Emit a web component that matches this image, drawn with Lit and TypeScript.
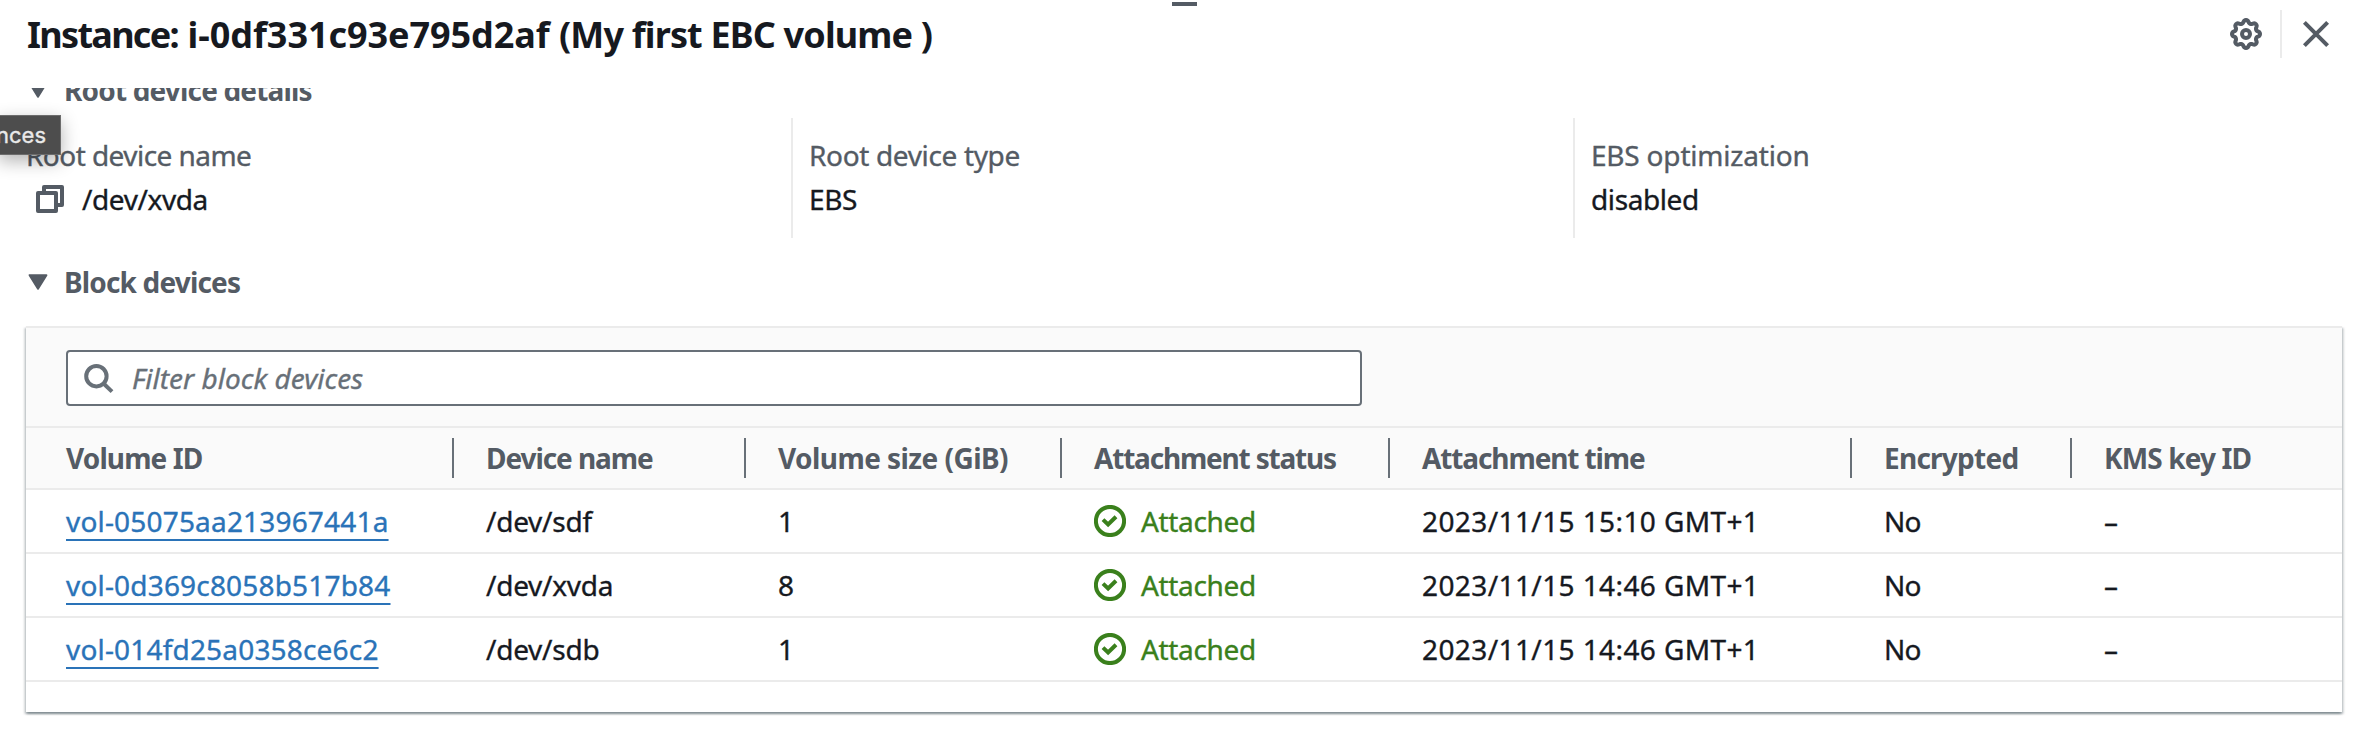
import { LitElement, html, css, svg } from "lit";
import { customElement } from "lit/decorators.js";

interface Volume {
  id: string;
  device: string;
  size: number;
  status: string;
  time: string;
  encrypted: string;
  kms: string;
}

const COLUMNS = [
  "Volume ID",
  "Device name",
  "Volume size (GiB)",
  "Attachment status",
  "Attachment time",
  "Encrypted",
  "KMS key ID",
];

const VOLUMES: Volume[] = [
  { id: "vol-05075aa213967441a", device: "/dev/sdf", size: 1, status: "Attached", time: "2023/11/15 15:10 GMT+1", encrypted: "No", kms: "–" },
  { id: "vol-0d369c8058b517b84", device: "/dev/xvda", size: 8, status: "Attached", time: "2023/11/15 14:46 GMT+1", encrypted: "No", kms: "–" },
  { id: "vol-014fd25a0358ce6c2", device: "/dev/sdb", size: 1, status: "Attached", time: "2023/11/15 14:46 GMT+1", encrypted: "No", kms: "–" },
];

// Eight-lobed gear outline around the centre of a 32px box.
const gearPoints = Array.from({ length: 96 }, (_, i) => {
  const a = (i / 96) * Math.PI * 2;
  const c = Math.cos(8 * a);
  const r = 12.5 + 1.5 * Math.sign(c) * Math.pow(Math.abs(c), 0.6);
  return `${(16 + r * Math.cos(a)).toFixed(2)},${(16 + r * Math.sin(a)).toFixed(2)}`;
}).join(" ");

const gearIcon = html`<svg class="icon" viewBox="0 0 32 32">
  ${svg`<polygon points=${gearPoints} /><circle cx="16" cy="16" r="4" />`}
</svg>`;
const closeIcon = html`<svg class="icon" viewBox="0 0 32 32"><path d="M4.4 4.4 27.6 27.6M27.6 4.4 4.4 27.6" /></svg>`;
const copyIcon = html`<svg class="icon" viewBox="0 0 32 32">
  <path stroke-linejoin="round" d="M4 10h18v18h-18zM10 10V4h18v18h-6" />
</svg>`;
const searchIcon = html`<svg class="icon search" viewBox="0 0 32 32"><circle cx="14.4" cy="14.2" r="10.2" /><path d="M21.3 21.2 30 29.6" /></svg>`;
const checkIcon = html`<svg class="icon check" viewBox="0 0 32 32"><circle cx="16" cy="16" r="14.1" /><path d="M9 14.6 14.1 19.4 22 11.8" /></svg>`;
const caretIcon = html`<svg class="caret" viewBox="0 0 20 16"><path d="M1.6 1.2h16.8L10 14.6z" /></svg>`;

@customElement("app-root")
export class AppRoot extends LitElement {
  static styles = css`
    :host {
      display: block;
      position: relative;
      height: 746px;
      overflow: hidden;
      background: #fff;
      color: #16191f;
      font: 400 28px/40px "Noto Sans", "Open Sans", sans-serif;
      -webkit-text-stroke: 0.35px currentColor;
      white-space: nowrap;
    }
    * { box-sizing: border-box; }
    .icon {
      display: block;
      flex: none;
      width: 32px;
      height: 32px;
      fill: none;
      stroke: #545b64;
      stroke-width: 4;
    }
    .grip {
      position: absolute;
      left: 1172px;
      top: 2px;
      width: 25px;
      height: 4px;
      background: #545b64;
    }
    .header {
      display: flex;
      justify-content: space-between;
      height: 88px;
      padding: 10px 30px 0 27px;
    }
    .title, .section, .head { -webkit-text-stroke-width: 0; }
    .title {
      margin: 0;
      padding-top: 3px;
      font-size: 36px;
      line-height: 44px;
      font-weight: 700;
    }
    .kind { letter-spacing: -1.7px; margin-right: 2px; }
    .ident { letter-spacing: -0.06px; }
    .name { letter-spacing: -0.85px; }
    .actions { display: flex; height: 48px; align-items: center; }
    .rule { width: 2px; height: 48px; margin: 0 18px; background: #ebebeb; }
    .body { padding: 0 20px 0 26px; overflow: hidden; height: 658px; }
    .section {
      display: flex;
      align-items: center;
      gap: 16px;
      height: 40px;
      margin: 0;
      padding-left: 2px;
      font-size: 28px;
      font-weight: 700;
      letter-spacing: -0.83px;
      color: #545b64;
    }
    .section span { padding-top: 2px; }
    .root { margin-top: -19px; }
    .caret { width: 20px; height: 16px; margin-top: 2px; fill: #545b64; stroke: #545b64; stroke-width: 2; stroke-linejoin: round; }
    .details {
      display: grid;
      grid-template-columns: 765px 782px 1fr;
      margin: 9px 0 23px;
    }
    .detail { height: 120px; padding: 17px 0 0 16px; border-left: 2px solid #ebebeb; }
    .detail:first-child { padding-left: 0; border-left: 0; }
    .label { color: #545b64; letter-spacing: -0.35px; margin-bottom: 4px; }
    .detail:first-child .label { letter-spacing: -0.55px; }
    .detail:last-child .label { letter-spacing: -0.2px; }
    .value { display: flex; align-items: center; letter-spacing: -0.4px; }
    .value .icon { margin: 0 16px 0 8px; }
    .card {
      width: 2316px;
      height: 386px;
      margin-top: 25px;
      border-top: 2px solid #ebebeb;
      background: #fff;
      box-shadow: 0 2px 2px rgba(0, 28, 36, 0.3), 2px 2px 2px rgba(0, 28, 36, 0.15), -2px 2px 2px rgba(0, 28, 36, 0.15);
    }
    .tools { height: 100px; padding: 22px 40px 0; background: #fafafa; border-bottom: 2px solid #ebebeb; }
    .filter {
      display: flex;
      align-items: center;
      gap: 18px;
      width: 1296px;
      height: 56px;
      padding-left: 14px;
      border: 2px solid #687078;
      border-radius: 4px;
      background: #fff;
      color: #687078;
      font-style: italic;
    }
    .search { stroke: #687078; }
    .row {
      display: grid;
      grid-template-columns: 428px 292px 316px 328px 462px 220px 1fr;
      align-items: center;
      height: 64px;
      border-bottom: 2px solid #ebebeb;
    }
    .cell { padding-left: 32px; }
    .cell:first-child { padding-left: 40px; }
    .head { height: 62px; background: #fafafa; color: #545b64; font-weight: 700; }
    .head .cell { height: 40px; border-right: 2px solid #687078; letter-spacing: -0.88px; }
    .head .cell:last-child { border-right: 0; }
    .head .cell:nth-child(2) { letter-spacing: -1.07px; }
    .head .cell:nth-child(3) { letter-spacing: -0.56px; }
    .head .cell:nth-child(4) { letter-spacing: -1.19px; }
    .head .cell:nth-child(5) { letter-spacing: -1.11px; }
    .head .cell:nth-child(6) { letter-spacing: -0.75px; }
    .link {
      color: #2a73b8;
      letter-spacing: 0.18px;
      text-decoration: underline 2px;
      text-underline-offset: 7px;
      text-decoration-skip-ink: none;
    }
    .device { letter-spacing: -0.25px; }
    .status { display: flex; align-items: center; gap: 15px; color: #3a801c; letter-spacing: -0.35px; }
    .check { stroke: #3a801c; }
    .time { letter-spacing: 0.4px; }
    .enc { letter-spacing: -0.9px; }
    .tooltip {
      position: absolute;
      left: -2px;
      top: 115px;
      width: 63px;
      height: 40px;
      padding-right: 14px;
      border: 1px solid #6c6c6c;
      background: #4d4d4d;
      box-shadow: 0 6px 18px rgba(0, 0, 0, 0.3);
      color: #e9e9e9;
      font: 400 22px/38px Inter, "Liberation Sans", sans-serif;
      display: flex;
      justify-content: flex-end;
      overflow: hidden;
    }
  `;

  private section(title: string, extra = "") {
    return html`<h2 class="section ${extra}">${caretIcon}<span>${title}</span></h2>`;
  }

  private row(v: Volume) {
    return html`<div class="row">
      <div class="cell"><a class="link">${v.id}</a></div>
      <div class="cell device">${v.device}</div>
      <div class="cell">${v.size}</div>
      <div class="cell status">${checkIcon}<span>${v.status}</span></div>
      <div class="cell time">${v.time}</div>
      <div class="cell enc">${v.encrypted}</div>
      <div class="cell">${v.kms}</div>
    </div>`;
  }

  render() {
    return html`
      <div class="header">
        <h1 class="title"><span class="kind">Instance: </span><span class="ident">i-0df331c93e795d2af </span><span class="name">(My first EBC volume )</span></h1>
        <div class="actions">${gearIcon}<div class="rule"></div>${closeIcon}</div>
      </div>
      <div class="body">
        ${this.section("Root device details", "root")}
        <div class="details">
          <div class="detail">
            <div class="label">Root device name</div>
            <div class="value">${copyIcon}<span>/dev/xvda</span></div>
          </div>
          <div class="detail">
            <div class="label">Root device type</div>
            <div class="value">EBS</div>
          </div>
          <div class="detail">
            <div class="label">EBS optimization</div>
            <div class="value">disabled</div>
          </div>
        </div>
        ${this.section("Block devices")}
        <div class="card">
          <div class="tools">
            <div class="filter">${searchIcon}<span>Filter block devices</span></div>
          </div>
          <div class="row head">${COLUMNS.map((c) => html`<div class="cell">${c}</div>`)}</div>
          ${VOLUMES.map((v) => this.row(v))}
        </div>
      </div>
      <div class="grip"></div>
      <div class="tooltip">nces</div>
    `;
  }
}
